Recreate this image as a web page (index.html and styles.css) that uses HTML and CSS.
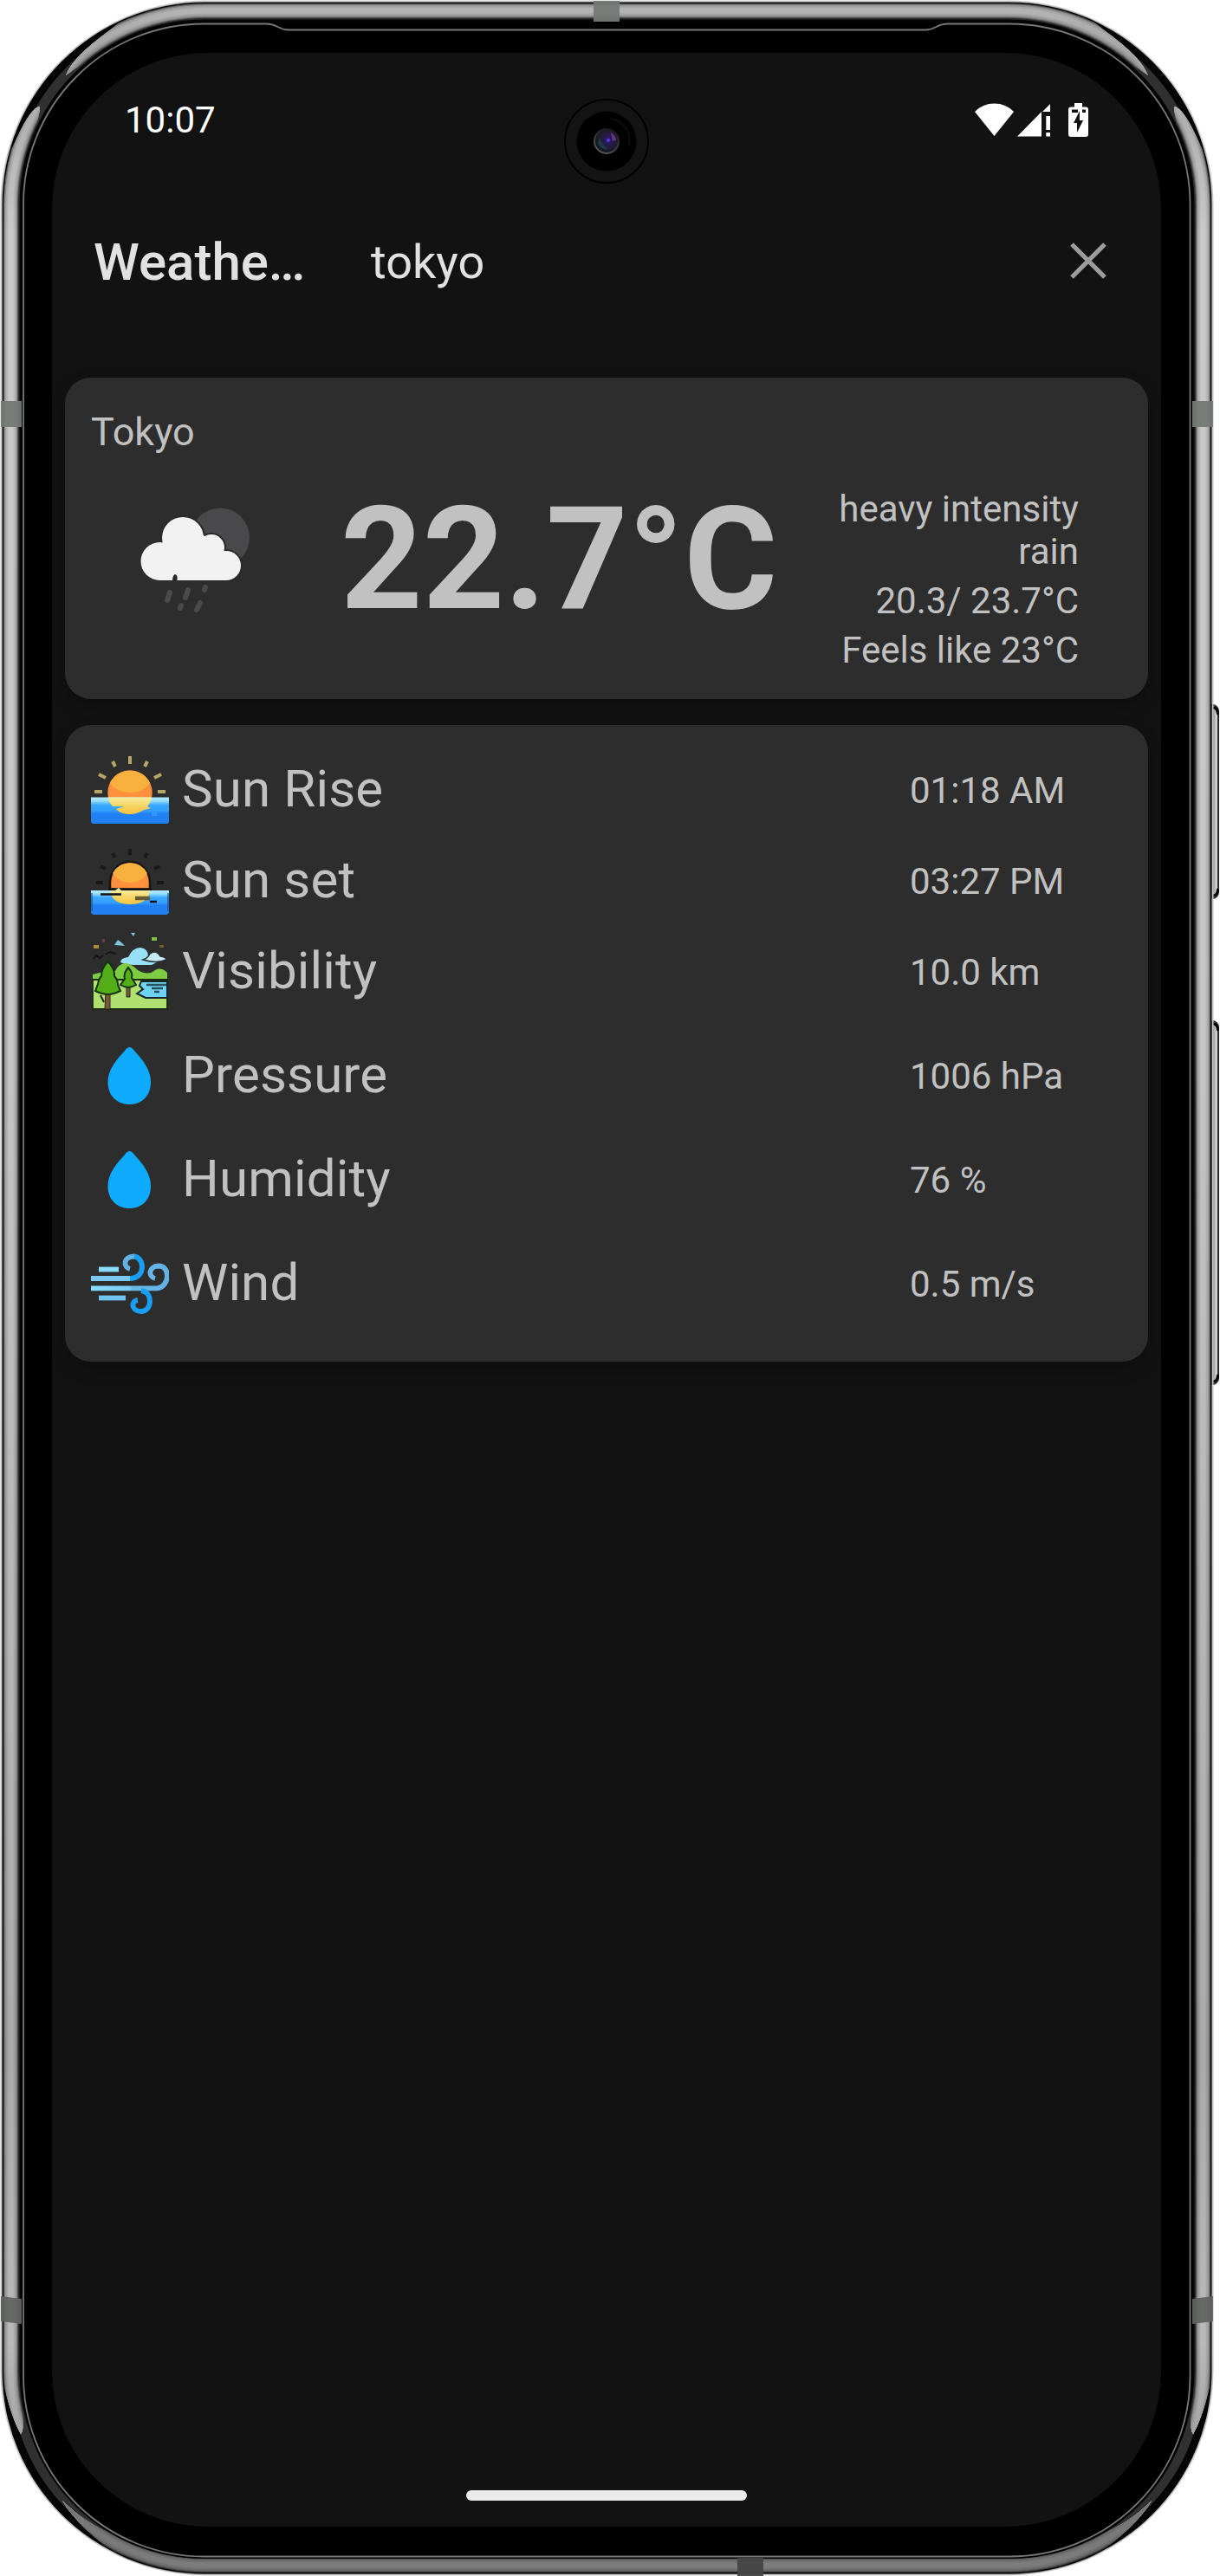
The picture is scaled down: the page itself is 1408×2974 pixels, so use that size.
FILE: index.html
```html
<!DOCTYPE html>
<html lang="en">
<head>
<meta charset="utf-8">
<title>Weather</title>
<link rel="stylesheet" href="styles.css">
</head>
<body>
<div class="phone">
  <svg class="frame" width="1408" height="2974" viewBox="0 0 1408 2974" aria-hidden="true">
    <defs>
      <linearGradient id="key" gradientUnits="userSpaceOnUse" x1="1399" x2="1406"><stop offset="0" stop-color="#666"/><stop offset=".35" stop-color="#aaa"/><stop offset=".75" stop-color="#ddd"/><stop offset="1" stop-color="#999"/></linearGradient>
      <linearGradient id="shade" x2="0" y2="1"><stop offset="0" stop-color="#000" stop-opacity=".1"/><stop offset=".02" stop-color="#000" stop-opacity=".18"/><stop offset=".05" stop-color="#000" stop-opacity=".12"/><stop offset=".09" stop-color="#000" stop-opacity="0"/><stop offset=".4" stop-color="#000" stop-opacity=".02"/><stop offset=".8" stop-color="#000" stop-opacity=".16"/><stop offset=".91" stop-color="#000" stop-opacity=".08"/><stop offset=".95" stop-color="#000" stop-opacity=".2"/><stop offset=".97" stop-color="#000" stop-opacity=".42"/><stop offset="1" stop-color="#000" stop-opacity=".38"/></linearGradient>
      <path id="sideShine" d="M46 123Q36 124 20 158L0 200V2735Q12 2790 24 2810Q28 2806 26 2785L60 2700V220L40 155Q46 132 46 123Z"/>
      <clipPath id="shine">
        <path d="M76 87C84 68 104 52 125 36C140 26 150 10 150 0H1251C1251 10 1261 26 1276 36C1297 52 1317 68 1325 87Q1290 60 1231 48L1100 60H301L170 48Q111 60 76 87Z"/>
        <path d="M72 2887Q85 2910 120 2938L170 2974H1231L1281 2938Q1316 2910 1329 2887C1291 2925 1251 2935 1201 2940H200C150 2935 110 2925 72 2887Z"/>
        <use href="#sideShine"/>
        <use href="#sideShine" transform="translate(1401) scale(-1 1)"/>
      </clipPath>
    </defs>
    <g fill="url(#key)" stroke="#2a2a2a" stroke-width="2">
      <rect x="1388" y="814" width="18" height="223" rx="7"/>
      <rect x="1388" y="1179" width="18" height="419" rx="7"/>
    </g>
    <g fill="none" stroke="#000" stroke-width="3" stroke-linecap="round">
      <path d="M1400 817Q1405 817 1405.500 824M1400 1034Q1405 1034 1405.500 1027M1400 1182Q1405 1182 1405.500 1189M1400 1595Q1405 1595 1405.500 1588"/>
    </g>
    <rect x="1.500" y="1.500" width="1398" height="2971" rx="236" fill="none" stroke="#c9c9c9" stroke-width="2"/>
    <rect x="2.500" y="2.500" width="1396" height="2969" rx="234" fill="#050505"/>
    <rect x="17" y="17" width="1367" height="2940" rx="219" fill="none" stroke="#303030" stroke-width="11"/>
    <g clip-path="url(#shine)">
      <g fill="none">
        <rect x="12.500" y="12.500" width="1376" height="2949" rx="224" stroke="#5c5c5c" stroke-width="17"/>
        <rect x="12.500" y="12.500" width="1376" height="2949" rx="224" stroke="#8a8a8a" stroke-width="15"/>
        <rect x="12.500" y="12.500" width="1376" height="2949" rx="224" stroke="#a8a8a8" stroke-width="13"/>
        <rect x="12.500" y="12.500" width="1376" height="2949" rx="224" stroke="#bbb" stroke-width="10"/>
        <rect x="12.500" y="12.500" width="1376" height="2949" rx="224" stroke="#cacaca" stroke-width="6"/>
      </g>
      <rect x="2" y="2" width="1397" height="2970" rx="234" fill="url(#shade)"/>
    </g>
    <rect x="24" y="25" width="1353" height="2929" rx="211" fill="#000"/>
    <path d="M235 27.500H308C320 27.500 321 34.500 333 34.500H1068C1080 34.500 1081 27.500 1093 27.500H1165A208.500 208.500 0 0 1 1373.500 236V2743A208.500 208.500 0 0 1 1165 2951.500H235A208.500 208.500 0 0 1 27 2743V236A208.500 208.500 0 0 1 235 27.500Z" fill="none" stroke="#777" stroke-width="1.800"/>
    <g fill="#757975" fill-opacity=".95">
      <rect x="1" y="463" width="24" height="30"/><rect x="1376" y="463" width="24" height="30"/>
      <rect x="685" y="1" width="30" height="24"/>
      <path d="M1 2651L25 2654V2683L1 2680ZM1400 2651L1376 2654V2683L1400 2680Z" fill="#60635f"/>
      <rect x="851" y="2953" width="30" height="21" fill="#444"/>
    </g>
  </svg>

  <main class="screen">
    <svg class="camera" width="100" height="100" viewBox="-50 -50 100 100" aria-hidden="true">
      <defs><radialGradient id="lens" cx=".58" cy=".45"><stop offset="0" stop-color="#4a2bc0"/><stop offset=".22" stop-color="#241b5c"/><stop offset=".6" stop-color="#261a36"/><stop offset="1" stop-color="#141a22"/></radialGradient>
      <linearGradient id="lensRim" x1=".2" y1="1" x2=".6" y2="0"><stop offset="0" stop-color="#5c5c5c"/><stop offset="1" stop-color="#1a1a1a"/></linearGradient></defs>
      <circle r="48" fill="#131313" stroke="#000" stroke-width="2"/>
      <circle r="34.500" fill="#000"/>
      <path d="M5-26A26 26 0 0 1 26 5" fill="none" stroke="#0d0d12" stroke-width="2"/>
      <circle r="14" fill="url(#lens)" stroke="url(#lensRim)" stroke-width="2"/>
      <path d="M5-10A12 12 0 0 1 11-1L7 0Z" fill="#7b4796" opacity=".7"/>
      <path d="M-10 3Q-5 11 2 9Q-7 2-8-5Z" fill="#1b4a56" opacity=".7"/>
      <circle cx="2" cy="-1" r="2" fill="#5a35e8"/>
    </svg>

    <header class="status">
      <span class="clock">10:07</span>
      <svg class="status-icons" width="132" height="40" viewBox="0 0 132 40" fill="#fff" aria-hidden="true">
        <path d="M0 10Q9 .5 22.500 .5T45 10L22.500 38Z"/>
        <path d="M49 38.500L77 10V38.500ZM87 1V10H78ZM82.300 15H87V31H82.300ZM82.300 34H87V38.500H82.300Z"/>
        <path fill-rule="evenodd" d="M115 0H124V4.500H128Q131 4.500 131 7.500V36Q131 39 128 39H111Q108 39 108 36V7.500Q108 4.500 111 4.500H115ZM112 7.500V11H119V7.500ZM124 7.500V11H128V7.500ZM121 9L114 23H118V34L125 20H121Z"/>
      </svg>
    </header>

    <div class="toolbar">
      <h1 class="title">Weathe…</h1>
      <span class="query">tokyo</span>
      <svg class="close" width="42" height="42" viewBox="0 0 42 42" aria-hidden="true"><path d="M2 2L40 40M40 2L2 40" stroke="#9d9d9d" stroke-width="5.200"/></svg>
    </div>

    <section class="card current">
      <h2 class="city">Tokyo</h2>
      <div class="now">
        <svg class="weather-icon" width="150" height="120" viewBox="150 580 150 120" aria-hidden="true">
          <circle cx="254" cy="620.500" r="34" fill="#49494b"/>
          <g fill="#2a2a2a" stroke="#2a2a2a" stroke-width="4"><circle cx="211" cy="621" r="24"/><circle cx="244" cy="632" r="15"/><circle cx="261" cy="653" r="17"/></g>
          <g fill="#f2f2f2"><circle cx="211" cy="621" r="24"/><circle cx="184.500" cy="648" r="22"/><circle cx="244" cy="632" r="15"/><circle cx="261" cy="653" r="17"/><path d="M186 628L235 618L260 640V670H184Z"/></g>
          <path d="M199 671Q199 664 202 663Q206 664 204 671Z" fill="#292929"/>
          <path d="M193 693L196 684M214 690L217 681M236 681L237 678M208 702L209 699M227 704L231 696" stroke="#4a4a4c" stroke-width="6" stroke-linecap="round"/>
        </svg>
        <div class="temp">22.7°C</div>
        <div class="details">
          <p>heavy intensity rain</p>
          <p>20.3/ 23.7°C</p>
          <p>Feels like 23°C</p>
        </div>
      </div>
    </section>

    <section class="card metrics">
      <svg width="0" height="0" class="defs"><defs>
        <linearGradient id="water" x2="0" y2="1"><stop offset="0" stop-color="#b0eaff"/><stop offset=".12" stop-color="#a0e2fb"/><stop offset=".3" stop-color="#38a7ff"/><stop offset=".5" stop-color="#35a0ff"/><stop offset=".62" stop-color="#2180f6"/><stop offset="1" stop-color="#2280f4"/></linearGradient>
        <linearGradient id="gold" x2="0" y2="1"><stop offset="0" stop-color="#f4ec9c"/><stop offset=".5" stop-color="#f6d565"/><stop offset="1" stop-color="#f7c23d"/></linearGradient>
        <linearGradient id="breeze"><stop offset="0" stop-color="#8adcff"/><stop offset=".5" stop-color="#78ccf8"/><stop offset=".54" stop-color="#6ab8e8"/><stop offset="1" stop-color="#62b2e6"/></linearGradient>
      </defs></svg>
      <div class="row">
        <svg width="90" height="90" viewBox="0 0 90 90" aria-hidden="true">
          <g stroke="#b5a767" stroke-width="4"><path d="M45 6V15M25 12L28 18M65 12L62 18M9 27L17 31M81 27L73 31M4 47H13M77 47H86"/></g>
          <circle cx="45" cy="48" r="25.700" fill="#ff913e"/>
          <path d="M22 37A25.700 25.700 0 0 1 68 37Q60 48 45 48T22 37Z" fill="#f9b13e"/>
          <path d="M0 53.500H90V81Q90 84 87 84H3Q0 84 0 81Z" fill="url(#water)"/>
          <path d="M20 53.500H70Q69 60 65 64L69 66L61 68Q53 73 45 73Q34 73 29 67L38 64H25Q20 59 20 53.500Z" fill="url(#gold)"/>
          <path d="M70 71H76V75H70Z" fill="#3098fd"/>
        </svg>
        <span class="label">Sun Rise</span><span class="value">01:18 AM</span>
      </div>
      <div class="row">
        <svg width="90" height="90" viewBox="0 0 90 90" aria-hidden="true">
          <g stroke="#191919" stroke-width="4"><path d="M45 8V15M25 13L28 18M65 13L62 18M11 28L17 31M79 28L73 31M6 47H14M76 47H84"/></g>
          <path d="M22 55V47A23 24 0 0 1 68 47V55Z" fill="#ff913e" stroke="#171411" stroke-width="2.500"/>
          <path d="M25 36A23 23 0 0 1 65 36Q58 47 45 47T25 36Z" fill="#f9b13e"/>
          <path d="M0 56H90V80Q90 84 86 84H4Q0 84 0 80Z" fill="url(#water)"/>
          <path d="M22 56H68Q66 72 45 72T22 56Z" fill="url(#gold)"/>
          <path d="M1 59V80M89 59V80" stroke="#17477d" stroke-opacity=".55" stroke-width="2"/>
          <path d="M20 54.500H70M11 60.500H35M68 69H76" stroke="#111" stroke-width="2.500"/><path d="M51 65H68" stroke="#635c34" stroke-width="4.500"/>
          <path d="M28 56L32 53L35 56Z" fill="#f2e69a"/>
        </svg>
        <span class="label">Sun set</span><span class="value">03:27 PM</span>
      </div>
      <div class="row">
        <svg width="90" height="90" viewBox="0 0 90 90" aria-hidden="true">
          <path d="M46 0H51L49 4ZM27 14L31 8L35 11L39 15Z" fill="#7cc6de"/>
          <path d="M3 14H9V18H3Z" fill="#b28b3b"/><path d="M70 5H76V9H70Z" fill="#7abe42"/><path d="M13 7H16V11H13Z" fill="#6f3b42"/><path d="M79 14H84V17H79Z" fill="#71592e"/>
          <path d="M3 30L6 26L10 29L14 26M17 25L22 22L28 24" fill="none" stroke="#151515" stroke-width="2"/>
          <path d="M34 34Q34 29 43 28Q48 17 57 17Q66 18 66 27L76 34L70 37H48Q38 36 34 34Z" fill="#98e0f6"/>
          <path d="M60 31Q66 29 68 24Q76 19 80 27Q87 28 87 31Q76 36 60 31Z" fill="#c7ecf6" stroke="#263033" stroke-width="1.500"/>
          <path d="M2 48L10 46L28 44Q32 35 41 35Q48 37 54 43Q66 50 74 43Q81 39 88 46V55H2Z" fill="#7dcc42"/>
          <path d="M2 54H88V88H2Z" fill="#afe070" stroke="#1e2916" stroke-width="1.800"/>
          <path d="M58 56H88V75H63L53 70L60 65L56 61Z" fill="#6fd2f5" stroke="#16272c" stroke-width="2"/>
          <path d="M64 60H87M70 64H83M73 68H79" stroke="#28515e" stroke-width="2.500"/>
          <path d="M17 67H22V88H16ZM41 60H45V74H41Z" fill="#79583e" stroke="#282a17"/>
          <path d="M19.500 33Q28 42 27 50Q31 54 31 60L34 67Q26 71 19.500 71T5 67L8 59Q9 53 12 50Q12 41 19.500 33ZM43 40Q49 47 47 52L52 60Q47 63 43 63T34 60L39 53Q37 47 43 40Z" fill="#54ae17" stroke="#153311" stroke-width="2"/>
          <path d="M11 72L15 80" stroke="#182510" stroke-width="2"/>
        </svg>
        <span class="label">Visibility</span><span class="value">10.0 km</span>
      </div>
      <div class="row spaced">
        <svg width="90" height="90" viewBox="0 0 90 90" aria-hidden="true"><path d="M44.500 12C47 12 48 14 50 16C60 27 69 38 69 52.500C69 68 59 78 44.500 78S19.500 68 19.500 52.500C19.500 38 29 27 39 16C41 14 42 12 44.500 12Z" fill="#0eabff"/></svg>
        <span class="label">Pressure</span><span class="value">1006 hPa</span>
      </div>
      <div class="row spaced">
        <svg width="90" height="90" viewBox="0 0 90 90" aria-hidden="true"><path d="M44.500 12C47 12 48 14 50 16C60 27 69 38 69 52.500C69 68 59 78 44.500 78S19.500 68 19.500 52.500C19.500 38 29 27 39 16C41 14 42 12 44.500 12Z" fill="#0eabff"/></svg>
        <span class="label">Humidity</span><span class="value">76 %</span>
      </div>
      <div class="row spaced">
        <svg width="90" height="90" viewBox="0 0 90 90" fill="none" stroke-width="5.800" aria-hidden="true">
          <path d="M0 39H46" stroke="#78c8f2"/><path d="M9 28.500H32" stroke="#8adcff"/><path d="M9 61.500H40" stroke="#70c2ef"/>
          <path d="M45 39C54 39 59 33 59 26C59 18 54 13.500 49 13.500" stroke="#189ff4"/>
          <path d="M50 13.500C37 13.500 37 26 45 28" stroke="#62b2e6"/>
          <path d="M0 50.300H76C84 50 88 42 88 36C88 29 84 24.500 78 24.500C66 25 66 37 74 39" stroke="url(#breeze)"/>
          <path d="M58 53C66 54 68 60 68 65C68 73 63 77 58 77C47 77 45 65 54 64" stroke="#189ff4"/>
        </svg>
        <span class="label">Wind</span><span class="value">0.5 m/s</span>
      </div>
    </section>
    <div class="home-bar"></div>
  </main>
</div>
</body>
</html>
```
FILE: styles.css
```css
* { box-sizing: border-box; }

body {
  margin: 0;
  background: #fff;
  font-family: Roboto, "Liberation Sans", sans-serif;
  color: #c1c1c1;
}

h1, h2, p { margin: 0; font-weight: 400; }

.phone {
  position: relative;
  width: 1408px;
  height: 2974px;
  padding: 61px 68px 57px 60px;
}

.frame { position: absolute; inset: 0; }

.screen {
  position: relative;
  display: flex;
  flex-direction: column;
  width: 1280px;
  height: 2856px;
  padding: 0 15px;
  background: #121212;
  border-radius: 180px;
}

.camera { position: absolute; left: 590px; top: 52px; }

.status {
  display: flex;
  justify-content: space-between;
  align-items: center;
  height: 155px;
  padding: 0 68px 0 69px;
  color: #fff;
}

.clock { font-size: 42px; }

.toolbar {
  display: flex;
  align-items: center;
  height: 170px;
  padding: 0 48px 0 33px;
  color: #e1e1e1;
}

.title { width: 320px; padding-top: 2px; font-size: 60px; font-weight: 500; }
.query { flex: 1; padding-top: 3px; font-size: 54px; }

.card {
  border-radius: 30px;
  background: #2d2d2d;
  box-shadow: 0 8px 18px rgba(0, 0, 0, .25);
}

.current {
  height: 371px;
  margin-top: 50px;
  padding: 36px 80px 0 30px;
}

.city { font-size: 45px; line-height: 53px; }

.now { display: flex; align-items: flex-start; }

.weather-icon { margin: 55px 0 0 45px; overflow: visible; }

.temp {
  margin: 24px 0 0 93px;
  font-size: 165px;
  font-weight: 700;
  line-height: 194px;
}

.details {
  width: 290px;
  margin: 38px 0 0 auto;
  font-size: 42px;
  line-height: 49px;
  text-align: right;
}

.details p + p { margin-top: 8px; }

.metrics {
  display: flex;
  flex-direction: column;
  gap: 15px;
  height: 735px;
  margin-top: 30px;
  padding: 30px;
}

.defs { position: absolute; }

.row {
  display: grid;
  grid-template-columns: 90px 855px 1fr;
  align-items: center;
  height: 90px;
}

.spaced { margin-top: 15px; }
.label { padding: 0 0 3px 15px; font-size: 60px; line-height: 70px; letter-spacing: .15px; }
.value { padding-top: 1px; font-size: 42px; line-height: 49px; }

.home-bar {
  width: 324px;
  height: 12px;
  margin: auto auto 30px 463px;
  border-radius: 6px;
  background: #ebebeb;
}
```
